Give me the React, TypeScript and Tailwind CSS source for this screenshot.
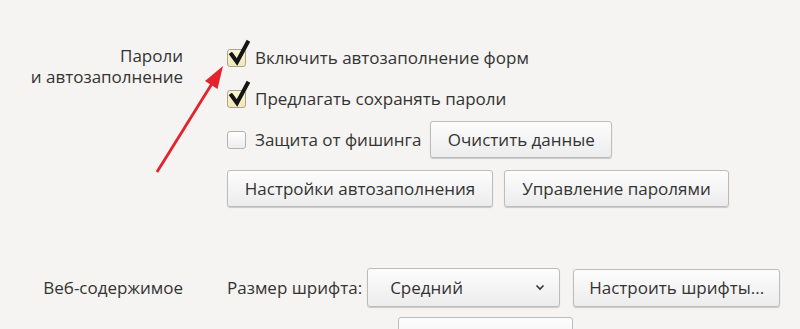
import React from "react";

const font = { fontFamily: '"Open Sans", "Noto Sans", sans-serif' };

function Check({ checked }: { checked?: boolean }) {
  return (
    <span className="relative mr-[9px] inline-block h-[18px] w-[19px] shrink-0">
      <span
        className={
          checked
            ? "block h-full w-full rounded-[3px] border border-[#a9a48c] bg-gradient-to-b from-[#fbf6d8] to-[#f1e8b8]"
            : "block h-full w-full rounded-[3px] border border-[#b3b3b3] bg-gradient-to-b from-white to-[#ececec]"
        }
      />
      {checked && (
        <svg className="absolute left-0 top-[-9px] h-[28px] w-[24px] overflow-visible" viewBox="0 0 24 28">
          <path d="M4.5 14.5 L10 22 L20.5 2.5" fill="none" stroke="#151515" strokeWidth="4" strokeLinecap="square" strokeLinejoin="miter" />
        </svg>
      )}
    </span>
  );
}

function Btn({ children, className = "" }: { children: React.ReactNode; className?: string }) {
  return (
    <button
      className={
        "h-[37px] whitespace-nowrap rounded-[3px] border border-[#bcbcbc] bg-gradient-to-b from-[#fdfdfd] to-[#ececec] px-0 text-[17px] text-[#333] shadow-[0_1px_1px_rgba(0,0,0,0.18)] " +
        className
      }
    >
      {children}
    </button>
  );
}

export default function App() {
  return (
    <div className="relative h-[329px] w-[800px] overflow-hidden bg-[#f5f4f2] text-[17px] text-[#333]" style={font}>
      <div className="flex pt-[37px]">
        <div className="w-[183px] pt-[8px] text-right leading-[21px]">
          <div>Пароли</div>
          <div>и автозаполнение</div>
        </div>
        <div className="ml-[44px] flex flex-col">
          <label className="flex h-[41px] items-center">
            <Check checked />
            <span>Включить автозаполнение форм</span>
          </label>
          <label className="flex h-[41px] items-center">
            <Check checked />
            <span>Предлагать сохранять пароли</span>
          </label>
          <div className="flex h-[41px] items-center">
            <Check />
            <span>Защита от фишинга</span>
            <Btn className="ml-[9px] w-[182px]">Очистить данные</Btn>
          </div>
          <div className="mt-[10px] flex gap-[11px]">
            <Btn className="w-[266px]">Настройки автозаполнения</Btn>
            <Btn className="w-[225px]">Управление паролями</Btn>
          </div>
        </div>
      </div>

      <div className="mt-[61px] flex items-center">
        <div className="w-[183px] text-right">Веб-содержимое</div>
        <div className="ml-[44px] flex items-center">
          <span>Размер шрифта:</span>
          <div className="ml-[5px] flex h-[39px] w-[193px] items-center justify-between rounded-[3px] border border-[#bcbcbc] bg-gradient-to-b from-[#fdfdfd] to-[#ececec] pl-[22px] pr-[14px] shadow-[0_1px_1px_rgba(0,0,0,0.18)]">
            <span>Средний</span>
            <svg width="10" height="7" viewBox="0 0 10 7">
              <path d="M1.5 1.5 L5 5 L8.5 1.5" fill="none" stroke="#333" strokeWidth="1.6" />
            </svg>
          </div>
          <Btn className="ml-[13px] h-[38px] w-[207px]">Настроить шрифты...</Btn>
        </div>
      </div>
      <div className="ml-[398px] mt-[10px] h-[30px] w-[175px] rounded-[3px] border border-[#bcbcbc] bg-gradient-to-b from-[#fdfdfd] to-[#f0f0f0]" />

      <svg className="pointer-events-none absolute left-0 top-0" width="800" height="329">
        <line x1="157" y1="172" x2="213" y2="82" stroke="#e4222c" strokeWidth="2.8" />
        <polygon points="223,66 217.5,89 205,81" fill="#e4222c" />
      </svg>
    </div>
  );
}
